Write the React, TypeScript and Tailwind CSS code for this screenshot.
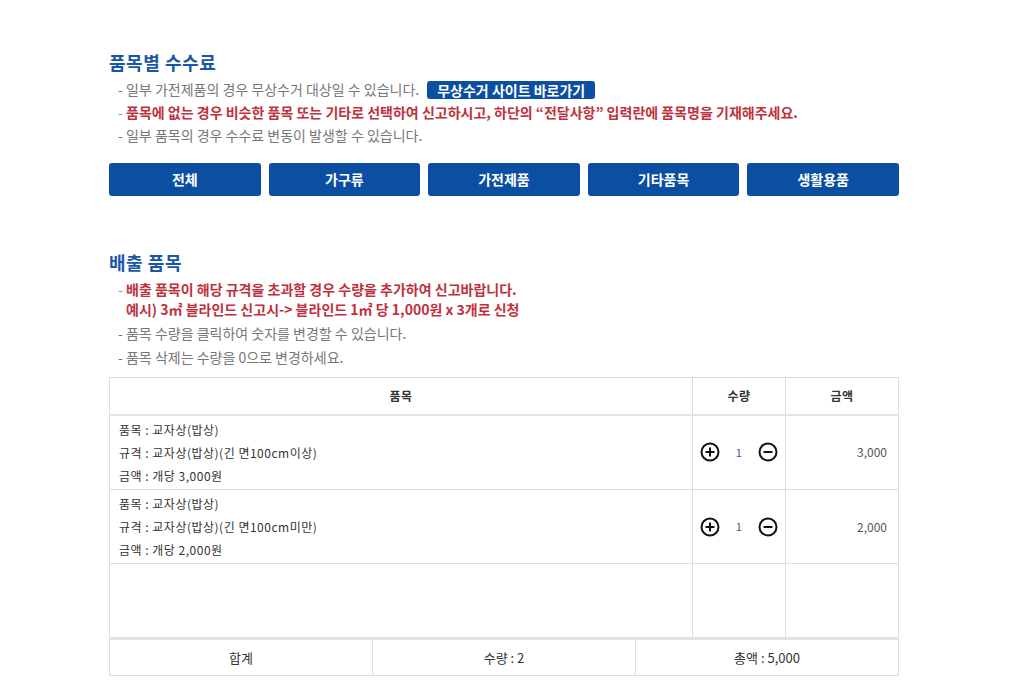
import React from 'react';

const font = { fontFamily: '"Noto Sans CJK KR", "Noto Sans", sans-serif' };

const categories = ['전체', '가구류', '가전제품', '기타품목', '생활용품'];

const items = [
  { name: '교자상(밥상)', spec: '교자상(밥상)(긴 면100cm이상)', unit: '3,000', qty: 1, price: '3,000' },
  { name: '교자상(밥상)', spec: '교자상(밥상)(긴 면100cm미만)', unit: '2,000', qty: 1, price: '2,000' },
];

const PlusIcon = () => (
  <svg width="20" height="20" viewBox="0 0 20 20" fill="none" stroke="#111" strokeWidth="2">
    <circle cx="10" cy="10" r="8.5" />
    <path d="M10 5.5v9M5.5 10h9" />
  </svg>
);

const MinusIcon = () => (
  <svg width="20" height="20" viewBox="0 0 20 20" fill="none" stroke="#111" strokeWidth="2">
    <circle cx="10" cy="10" r="8.5" />
    <path d="M5.5 10h9" />
  </svg>
);

const App: React.FC = () => {
  return (
    <div className="min-h-[700px] bg-white" style={font}>
      <div className="ml-[109px] w-[790px] pt-[49px]">
        <h2 className="text-[18px] font-bold leading-[26px] tracking-[0.03em] text-[#1b56a6]">품목별 수수료</h2>
        <ul className="mt-[3px] pl-[9px] text-[14px]">
          <li className="flex h-[23px] items-center text-[#777]">
            - 일부 가전제품의 경우 무상수거 대상일 수 있습니다.
            <span className="ml-[8px] rounded-[3px] bg-[#0b4ea2] px-[10px] text-[14px] font-bold leading-[18px] text-white">
              무상수거 사이트 바로가기
            </span>
          </li>
          <li className="flex h-[23px] items-center font-bold text-[#c0313d]">
            <span className="font-normal text-[#999]">-&nbsp;</span>
            품목에 없는 경우 비슷한 품목 또는 기타로 선택하여 신고하시고, 하단의 “전달사항” 입력란에 품목명을 기재해주세요.
          </li>
          <li className="flex h-[23px] items-center text-[#777]">- 일부 품목의 경우 수수료 변동이 발생할 수 있습니다.</li>
        </ul>

        <div className="mt-[16px] flex gap-[8px]">
          {categories.map((c) => (
            <button
              key={c}
              type="button"
              className="h-[33px] flex-1 rounded-[3px] bg-[#0b4ea2] text-[14px] font-bold text-white"
            >
              {c}
            </button>
          ))}
        </div>

        <h2 className="mt-[53px] text-[18px] font-bold leading-[26px] tracking-[0.03em] text-[#1b56a6]">배출 품목</h2>
        <ul className="mt-[4px] pl-[9px] text-[14px]">
          <li className="flex leading-[20px] font-bold text-[#c0313d]">
            <span className="font-normal text-[#999]">-&nbsp;</span>
            <span>
              배출 품목이 해당 규격을 초과할 경우 수량을 추가하여 신고바랍니다.
              <br />
              예시) 3㎡ 블라인드 신고시-&gt; 블라인드 1㎡ 당 1,000원 x 3개로 신청
            </span>
          </li>
          <li className="mt-[2px] flex h-[24px] items-center text-[#777]">- 품목 수량을 클릭하여 숫자를 변경할 수 있습니다.</li>
          <li className="flex h-[24px] items-center text-[#777]">- 품목 삭제는 수량을 0으로 변경하세요.</li>
        </ul>

        <table className="mt-[8px] w-full border-collapse text-[12px] tracking-[0.5px] text-[#333]">
          <thead>
            <tr className="h-[37px] border-b-2 border-[#e4e4e4]">
              <th className="border border-[#ddd] font-bold">품목</th>
              <th className="w-[93px] border border-[#ddd] font-bold">수량</th>
              <th className="w-[113px] border border-[#ddd] font-bold">금액</th>
            </tr>
          </thead>
          <tbody>
            {items.map((it, i) => (
              <tr key={i} className={i === 0 ? 'h-[75px]' : 'h-[74px]'}>
                <td className="border border-[#ddd] px-[9px] align-middle leading-[23px]">
                  <div>품목 : {it.name}</div>
                  <div>규격 : {it.spec}</div>
                  <div>금액 : 개당 {it.unit}원</div>
                </td>
                <td className="border border-[#ddd]">
                  <div className="flex items-center justify-center gap-[16px]">
                    <PlusIcon />
                    <span className="text-[11px] text-[#3a5a8c]">{it.qty}</span>
                    <MinusIcon />
                  </div>
                </td>
                <td className="border border-[#ddd] pr-[11px] text-right text-[12px] tracking-normal text-[#555]">
                  {it.price}
                </td>
              </tr>
            ))}
            <tr className="h-[74px]">
              <td className="border border-[#ddd]" />
              <td className="border border-[#ddd]" />
              <td className="border border-[#ddd]" />
            </tr>
          </tbody>
        </table>
        <table className="w-full table-fixed border-collapse text-[13px] text-[#333]">
          <tbody>
            <tr className="h-[36px]">
              <td className="border border-t-2 border-[#ddd] border-t-[#e4e4e4] text-center">합계</td>
              <td className="border border-t-2 border-[#ddd] border-t-[#e4e4e4] text-center">수량 : 2</td>
              <td className="border border-t-2 border-[#ddd] border-t-[#e4e4e4] text-center">총액 : 5,000</td>
            </tr>
          </tbody>
        </table>
      </div>
    </div>
  );
};

export default App;
